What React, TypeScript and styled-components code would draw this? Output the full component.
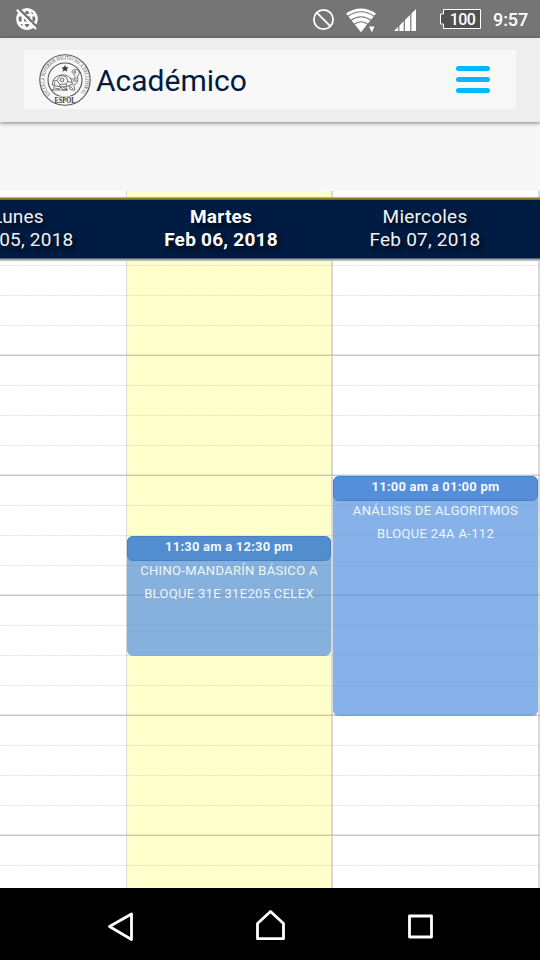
import React from "react";
import styled, { createGlobalStyle, css } from "styled-components";

const GlobalStyle = createGlobalStyle`
  * { box-sizing: border-box; }
  body { margin: 0; background: #fff; font-family: Roboto, sans-serif; }
`;

const Screen = styled.main`
  width: 540px;
  height: 960px;
  display: flex;
  flex-direction: column;
  overflow: hidden;
`;

const StatusBar = styled.header`
  flex: 0 0 38px;
  display: flex;
  align-items: center;
  padding: 0 11px 0 15px;
  background: #757575;
  color: #fff;
`;

const StatusIcons = styled.div`
  margin-left: auto;
  display: flex;
  align-items: center;
`;

const Battery = styled.div`
  display: grid;
  position: relative;
  width: 41px;
  height: 20px;
  margin-left: 22px;

  svg { grid-area: 1 / 1; }
  span {
    grid-area: 1 / 1;
    z-index: 1;
    padding-left: 4px;
    text-align: center;
    font-size: 16px;
    font-weight: 500;
    line-height: 21px;
    letter-spacing: -0.6px;
  }
`;

const Clock = styled.span`
  width: 36px;
  margin-left: 12px;
  padding-top: 2px;
  font-size: 18px;
  font-weight: 500;
  line-height: 36px;
  letter-spacing: -0.1px;
  white-space: nowrap;
`;

const AppBar = styled.div`
  flex: 0 0 84px;
  padding: 12px 24px 13px;
  background: #eee;
  box-shadow: 0 1px 4px rgba(0, 0, 0, 0.5);
  z-index: 1;
`;

const TitleBar = styled.div`
  height: 59px;
  display: flex;
  align-items: center;
  padding: 0 26px 0 15px;
  background: #f8f8f8;
`;

const Title = styled.h1`
  margin: 2px auto 0 5px;
  color: #001b42;
  font-size: 30px;
  font-weight: 400;
  line-height: 40px;
`;

const MenuButton = styled.button`
  display: flex;
  flex-direction: column;
  gap: 6px;
  width: 34px;
  padding: 0;
  border: 0;
  background: none;
`;

const MenuBar = styled.span`
  height: 5px;
  border-radius: 3px;
  background: #00b9ff;
`;

const Spacer = styled.div`
  flex: 0 0 69px;
  background: #f7f7f7;
`;

const Calendar = styled.section`
  flex: 1;
  min-height: 0;
  display: flex;
  flex-direction: column;
  overflow: hidden;
`;

const columns = css`
  display: grid;
  grid-template-columns: 127px 206px 207px;
`;

const Strip = styled.div`
  ${columns}
  flex: 0 0 6px;
`;

const DayHeader = styled.div`
  ${columns}
  flex: 0 0 64px;
  border-top: 1px solid #aaa99c;
  border-bottom: 1px solid #bbb;
  background: linear-gradient(#998326 0 1px, #79661c 1px 2px, #001b42 2px 60px, #535f73 60px 61px, #a4a7ac 61px);
`;

const DayName = styled.div<{ $today?: boolean; $shift?: number }>`
  width: 206px;
  justify-self: end;
  margin-right: ${(p) => p.$shift ?? 0}px;
  padding-top: 6.5px;
  color: ${(p) => (p.$today ? "#fff" : "#f2f2f2")};
  font-size: 19px;
  font-weight: ${(p) => (p.$today ? 700 : 400)};
  line-height: 23px;
  letter-spacing: ${(p) => (p.$today ? 0.25 : 0.22)}px;
  text-align: center;
  text-shadow: 3px 4px 5px rgba(0, 0, 0, 0.65);
`;

const Column = styled.div<{ $today?: boolean; $edge: number }>`
  position: relative;
  background: ${(p) => (p.$today ? "#ffffcc" : "#fff")};
  border-right: ${(p) => p.$edge}px solid #d8d8da;
`;

const Grid = styled.div`
  ${columns}
  flex: 1;
  min-height: 0;
`;

const Slot = styled.div<{ $hour: boolean; $first: boolean }>`
  height: ${(p) => (p.$first ? 5 : 30)}px;
  margin-right: -2px;
  background: ${(p) =>
    p.$hour
      ? "linear-gradient(#d2d2d2, #d2d2d2) bottom / 100% 1px no-repeat"
      : "repeating-linear-gradient(90deg, rgba(110,110,130,.17) 0 2px, rgba(110,110,130,.07) 2px 3px) bottom / 100% 1px no-repeat"};
  box-shadow: ${(p) => (p.$hour ? "inset 0 -2px rgba(150,150,150,.22)" : "none")};
`;

const Event = styled.article<{ $top: number; $height: number; $color: string }>`
  position: absolute;
  top: ${(p) => p.$top}px;
  left: 0;
  right: 0;
  height: ${(p) => p.$height}px;
  border-radius: 6px;
  background: ${(p) => p.$color};
  color: rgba(255, 255, 255, 0.9);
  font-size: 13px;
  font-weight: 400;
  line-height: 23px;
  letter-spacing: 0.32px;
  text-align: center;
  white-space: pre-line;
`;

const EventTime = styled.div<{ $color: string }>`
  height: 25px;
  margin-bottom: -2px;
  border: 1px solid #467fc5;
  border-radius: 6px;
  background: ${(p) => p.$color};
  color: rgba(255, 255, 255, 0.94);
  font-weight: 700;
  line-height: 20px;
  letter-spacing: 0.22px;
`;

const NavBar = styled.nav`
  flex: 0 0 72px;
  display: flex;
  align-items: center;
  justify-content: space-between;
  padding: 6px 103px 0 105px;
  background: #000;
`;

const slots = Array.from({ length: 22 }, (_, i) => i);

const Slots = () => (
  <>
    {slots.map((i) => (
      <Slot key={i} $first={i === 0} $hour={i % 4 === 3} />
    ))}
  </>
);

const NoNetwork = () => (
  <svg width="24" height="24" viewBox="0 0 24 24" fill="none" stroke="#fff">
    <circle cx="12" cy="12" r="9.6" strokeWidth="2.4" />
    <ellipse cx="12" cy="12" rx="4.3" ry="9.6" strokeWidth="2.4" />
    <path d="M3 8.3h18M3 15.7h18" strokeWidth="2.4" />
    <path d="M3.2 1.2 22.4 20.4" stroke="#757575" strokeWidth="2.6" />
    <path d="M1.8 2.8 21 22" strokeWidth="2" />
  </svg>
);

const Signals = () => (
  <svg width="106" height="30" viewBox="0 0 106 30">
    <g fill="none" stroke="#fff" strokeWidth="1.8">
      <circle cx="11.5" cy="15.5" r="9.6" />
      <path d="m4.8 8.7 13.4 13.5" />
    </g>
    <path d="M34 9.500Q49-.7 64 9.500L49 28.300Z" fill="#fff" />
    <g fill="none" stroke="#757575" strokeWidth="1.2">
      <path d="M35.500 12.500q13.500-9.500 27 0" />
      <path d="M38.500 16.500q10.500-7.500 21 0M41.800 20.500q7.200-5.500 14.400 0" />
    </g>
    <path d="M54 21.200h13l-6.500 10Z" fill="#757575" />
    <path d="M57 22.500h5.500l-2.700 6Z" fill="#fff" />
    <path d="M82 27 104 5v22Z" fill="#fff" />
    <path d="M86.800 4v23M92.300 4v23M98.800 4v23" stroke="#757575" strokeWidth="1.200" />
  </svg>
);

const Seal = () => (
  <svg width="52" height="52" viewBox="0 0 52 52" fill="none" stroke="#555">
    <defs>
      <path id="seal-ring" d="M11.500 40.500A20.500 20.500 0 1 1 40.500 40.500" />
    </defs>
    <circle cx="26" cy="26" r="25.200" strokeWidth="1.100" />
    <circle cx="26" cy="26" r="17" strokeWidth="1.100" />
    <text fill="#444" stroke="none" fontFamily="Liberation Serif" fontSize="5.300">
      <textPath href="#seal-ring" textLength="94" lengthAdjust="spacingAndGlyphs">ESCUELA SUPERIOR POLITECNICA DEL LITORAL</textPath>
    </text>
    <path d="M15.500 42.500h21v6.500h-21z" fill="#f8f8f8" stroke="none" />
    <text x="26" y="49" textAnchor="middle" fill="#333" stroke="none" fontFamily="Liberation Serif" fontWeight="700" fontSize="8" textLength="21" lengthAdjust="spacingAndGlyphs">ESPOL</text>
    <path d="m26 11.500.9 2.100 2.200.1-1.700 1.400.6 2.200-2-1.200-2 1.200.6-2.200-1.700-1.400 2.200-.1Z" fill="#333" stroke="#333" strokeWidth=".5" />
    <g stroke="#555" strokeWidth=".8" strokeLinejoin="round">
      <path d="M13.500 31q-.5-6 4.500-8.500 6-3.500 11.500 0 4 3 4 7.500-8 5-20 1Z" />
      <path d="m14 27 4-.5 3-5 6 1 2 5 4 1M18 26.500l3 4 6-.5 2-3M21 30.500l-1 2.500M27 30l1 2M16 28l-1 3M22 24l3 1-1 3-3-1Z" />
      <path d="M31 24c4 3 7-1 3.500-4-3-2-1-5 2-4.500 4 .5 5 4 2 6.500 1 6-1 9-5 9M34 18h3m-1-2v4M38 24l-3 2M38 27h-4" />
      <path d="M15 32q1 3-2 4h6l3-3 2 3h4l-1-3m3-1q0 4 3 4h3l-1-4M16 34l4 1m4-2 3 2m4-3 3 3M19 36h10" />
    </g>
  </svg>
);

export default function App() {
  return (
    <>
      <GlobalStyle />
      <Screen>
        <StatusBar>
          <NoNetwork />
          <StatusIcons>
            <Signals />
            <Battery>
              <svg width="41" height="20" viewBox="0 0 41 20">
                <path d="M3.500.5h37v19h-37v-4.500h-3V5h3Z" fill="#515151" stroke="#fff" />
              </svg>
              <span>100</span>
            </Battery>
            <Clock>9:57</Clock>
          </StatusIcons>
        </StatusBar>
        <AppBar>
          <TitleBar>
            <Seal />
            <Title>Académico</Title>
            <MenuButton aria-label="Menú">
              <MenuBar />
              <MenuBar />
              <MenuBar />
            </MenuButton>
          </TitleBar>
        </AppBar>
        <Spacer />
        <Calendar>
          <Strip>
            <Column $edge={1} />
            <Column $edge={2} $today />
            <Column $edge={2} />
          </Strip>
          <DayHeader>
            <DayName $shift={6}>Lunes<br />Feb 05, 2018</DayName>
            <DayName $today $shift={9}>Martes<br />Feb 06, 2018</DayName>
            <DayName $shift={12}>Miercoles<br />Feb 07, 2018</DayName>
          </DayHeader>
          <Grid>
            <Column $edge={1}>
              <Slots />
            </Column>
            <Column $edge={2} $today>
              <Slots />
              <Event $top={275} $height={120} $color="rgba(83,144,227,.7)">
                <EventTime $color="#528dd0">11:30 am a 12:30 pm</EventTime>
                {"CHINO-MANDARÍN BÁSICO A\nBLOQUE 31E 31E205 CELEX"}
              </Event>
            </Column>
            <Column $edge={2}>
              <Slots />
              <Event $top={215} $height={240} $color="rgba(82,145,224,.7)">
                <EventTime $color="#558fda">11:00 am a 01:00 pm</EventTime>
                {"ANÁLISIS DE ALGORITMOS\nBLOQUE 24A A-112"}
              </Event>
            </Column>
          </Grid>
        </Calendar>
        <NavBar>
          <svg width="32" height="36" viewBox="0 0 32 36" fill="none" stroke="#fff" strokeWidth="2.8" strokeLinejoin="round">
            <path d="M26.500 5v25.500L4.500 17.500Z" />
          </svg>
          <svg width="32" height="36" viewBox="0 0 32 36" fill="none" stroke="#fff" strokeWidth="2.8" strokeLinejoin="round">
            <path d="M2.500 14.500 15.500 2.500l13 12v15.200h-26Z" />
          </svg>
          <svg width="32" height="36" viewBox="0 0 32 36" fill="none" stroke="#fff" strokeWidth="2.8" strokeLinejoin="round">
            <path d="M4.500 7h22v21h-22Z" />
          </svg>
        </NavBar>
      </Screen>
    </>
  );
}
